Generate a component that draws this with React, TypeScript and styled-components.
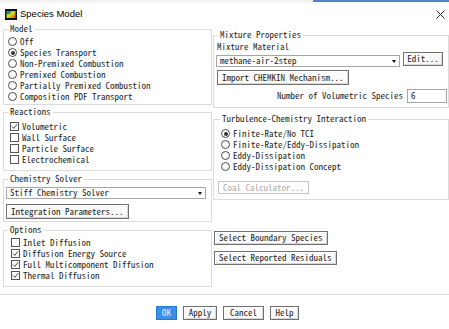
import React from 'react';
import styled, { createGlobalStyle } from 'styled-components';

const MONO = `"Noto Sans Mono CJK SC", "Liberation Mono", monospace`;

const GlobalStyle = createGlobalStyle`
  html, body {
    margin: 0;
    padding: 0;
    background: #fff;
  }
`;

const Frame = styled.div`
  width: 449px;
  height: 329px;
  display: flex;
  flex-direction: column;
  background: #fff;
  overflow: hidden;
  font-family: ${MONO};
  font-size: 9px;
  line-height: 10px;
  color: #262626;
`;

const BackStrip = styled.div`
  height: 3px;
  display: flex;
  background: #f4f4f4;

  .blue {
    margin-left: 313px;
    flex: 1;
    height: 2px;
    background: #5a7fcb;
  }
`;

const TitleBar = styled.div`
  height: 22px;
  display: flex;
  align-items: center;
  padding: 0 4px 0 5px;
  font-family: 'Liberation Sans', Arial, sans-serif;
  font-size: 9.5px;
  line-height: 12px;
  color: #000;

  svg.logo {
    margin-right: 3px;
  }
  .title {
    flex: 1;
  }
`;

const Body = styled.div`
  height: 269px;
  display: flex;
  gap: 1px;
  padding: 0 0 0 3px;
`;

const Column = styled.div<{ $w: number }>`
  width: ${(p) => p.$w}px;
  display: flex;
  flex-direction: column;
`;

const Group = styled.div<{ $mt: number; $pl?: number; $pr?: number; $pb: number }>`
  margin-top: ${(p) => p.$mt}px;
  border: 1px solid #dcdcdc;
  padding: 0 ${(p) => p.$pr ?? 4}px ${(p) => p.$pb}px ${(p) => p.$pl ?? 4}px;
  display: flex;
  flex-direction: column;
  align-items: flex-start;
`;

const Legend = styled.div<{ $after?: number; $ml?: number }>`
  height: 10px;
  line-height: 10px;
  margin: -6px 0 ${(p) => p.$after ?? 2}px ${(p) => p.$ml ?? 0}px;
  padding: 0 2px;
  background: #fff;
  white-space: nowrap;
`;

const Row = styled.label<{ $h?: number }>`
  height: ${(p) => p.$h ?? 11}px;
  line-height: ${(p) => p.$h ?? 11}px;
  display: flex;
  align-items: center;
  gap: 3px;
  white-space: nowrap;
`;

const RadioDot = styled.span<{ $on?: boolean }>`
  width: 9px;
  height: 9px;
  box-sizing: border-box;
  border-radius: 50%;
  border: 1px solid #4a4a4a;
  display: flex;
  align-items: center;
  justify-content: center;

  &::after {
    content: '';
    width: 4px;
    height: 4px;
    border-radius: 50%;
    background: ${(p) => (p.$on ? '#333' : 'transparent')};
  }
`;

const Box = styled.span`
  width: 9px;
  height: 9px;
  box-sizing: border-box;
  border: 1px solid #555;
  display: flex;
`;

const Button = styled.button<{ $w?: number; $h?: number; $mt?: number }>`
  height: ${(p) => p.$h ?? 14}px;
  ${(p) => (p.$w ? `width: ${p.$w}px;` : '')}
  margin-top: ${(p) => p.$mt ?? 0}px;
  padding: 0 4px;
  box-sizing: border-box;
  border: 1px solid #707070;
  box-shadow: inset 1px 1px #fff, inset -1px -1px #d8d8d8;
  background: #fafafa;
  font-family: ${MONO};
  font-size: 9px;
  line-height: 10px;
  color: #262626;
  display: inline-flex;
  align-items: center;
  justify-content: center;
  white-space: nowrap;

  &:disabled {
    border-color: #c4c4c4;
    color: #a8a8a8;
    background: #fff;
    box-shadow: none;
  }
`;

const PrimaryButton = styled(Button)`
  background: #3b8fe6;
  border-color: #2a78cc;
  box-shadow: none;
  color: #e8f2ff;
`;

const Select = styled.div<{ $w: number }>`
  width: ${(p) => p.$w}px;
  height: 12px;
  box-sizing: border-box;
  border: 1px solid #a6a6a6;
  display: flex;
  align-items: center;
  padding: 0 3px 0 3px;
  white-space: nowrap;

  span {
    flex: 1;
  }
  &::after {
    content: '';
    border-left: 2.5px solid transparent;
    border-right: 2.5px solid transparent;
    border-top: 3px solid #111;
  }
`;

const MaterialRow = styled.div`
  display: flex;
  align-items: flex-start;
  margin-left: -1px;

  ${Select} {
    margin-top: 3px;
  }
  ${Button} {
    margin-left: 3px;
  }
`;

const NumberRow = styled.div`
  align-self: stretch;
  margin-top: 4px;
  display: flex;
  align-items: center;
  justify-content: flex-end;
  gap: 4px;
`;

const NumInput = styled.div`
  width: 40px;
  height: 14px;
  box-sizing: border-box;
  border: 1px solid #a6a6a6;
  padding: 0 3px;
  display: flex;
  align-items: center;
`;

const Indent = styled.div<{ $l: number }>`
  margin-left: ${(p) => p.$l}px;
  display: flex;
  flex-direction: column;
`;

const SideButtons = styled.div`
  margin: 31px 0 0 1px;
  display: flex;
  flex-direction: column;
  align-items: flex-start;
  gap: 6px;
`;

const Footer = styled.div`
  flex: 1;
  border-top: 1px solid #dcdcdc;
  display: flex;
  align-items: flex-start;
  gap: 6px;
  padding: 11px 0 0 156px;
`;

const WindowIcon = () => (
  <svg className="logo" width="12" height="11" viewBox="0 0 12 11">
    <defs>
      <linearGradient id="flu" x1="0" y1="0" x2="1" y2="1">
        <stop offset="0" stopColor="#2fbf3a" />
        <stop offset="0.5" stopColor="#d8e020" />
        <stop offset="1" stopColor="#e23a1e" />
      </linearGradient>
    </defs>
    <rect x="0" y="0" width="12" height="11" fill="#111" />
    <rect x="1.5" y="2" width="9" height="7" fill="url(#flu)" />
    <rect x="1.5" y="2" width="4" height="3" fill="#1e60d0" opacity="0.7" />
  </svg>
);

const CloseIcon = () => (
  <svg width="9" height="9" viewBox="0 0 9 9">
    <path d="M0.5 0.5 L8.5 8.5 M8.5 0.5 L0.5 8.5" stroke="#222" strokeWidth="1" />
  </svg>
);

const Radio = ({ on, children }: { on?: boolean; children: React.ReactNode }) => (
  <Row>
    <RadioDot $on={on} />
    {children}
  </Row>
);

const Check = ({ on, children }: { on?: boolean; children: React.ReactNode }) => (
  <Row>
    <Box>
      {on && (
        <svg width="7" height="7" viewBox="0 0 7 7">
          <path d="M1 3.5 L2.8 5.4 L6.2 1.2" stroke="#444" strokeWidth="1" fill="none" />
        </svg>
      )}
    </Box>
    {children}
  </Row>
);

export default function App() {
  return (
    <Frame>
      <GlobalStyle />
      <BackStrip>
        <div className="blue" />
      </BackStrip>
      <TitleBar>
        <WindowIcon />
        <span className="title">Species Model</span>
        <CloseIcon />
      </TitleBar>

      <Body>
        <Column $w={209}>
          <Group $mt={4} $pl={4} $pb={2}>
            <Legend>Model</Legend>
            <Radio>Off</Radio>
            <Radio on>Species Transport</Radio>
            <Radio>Non-Premixed Combustion</Radio>
            <Radio>Premixed Combustion</Radio>
            <Radio>Partially Premixed Combustion</Radio>
            <Radio>Composition PDF Transport</Radio>
          </Group>

          <Group $mt={7} $pl={4} $pb={5}>
            <Legend $after={4}>Reactions</Legend>
            <Indent $l={2}>
              <Check on>Volumetric</Check>
              <Check>Wall Surface</Check>
              <Check>Particle Surface</Check>
              <Check>Electrochemical</Check>
            </Indent>
          </Group>

          <Group $mt={8} $pl={2} $pr={3} $pb={2}>
            <Legend $after={3} $ml={2}>
              Chemistry Solver
            </Legend>
            <Select $w={200}>
              <span>Stiff Chemistry Solver</span>
            </Select>
            <Button $h={15} $mt={5}>
              Integration Parameters...
            </Button>
          </Group>

          <Group $mt={8} $pl={4} $pb={5}>
            <Legend $after={2}>Options</Legend>
            <Indent $l={3}>
              <Check>Inlet Diffusion</Check>
              <Check on>Diffusion Energy Source</Check>
              <Check on>Full Multicomponent Diffusion</Check>
              <Check on>Thermal Diffusion</Check>
            </Indent>
          </Group>
        </Column>

        <Column $w={236}>
          <Group $mt={10} $pl={3} $pr={1} $pb={4}>
            <Legend $after={2} $ml={1}>
              Mixture Properties
            </Legend>
            <Row as="div" $h={10}>
              Mixture Material
            </Row>
            <MaterialRow>
              <Select $w={184}>
                <span>methane-air-2step</span>
              </Select>
              <Button $h={14} $w={40}>
                Edit...
              </Button>
            </MaterialRow>
            <Button $h={15} $mt={3}>
              Import CHEMKIN Mechanism...
            </Button>
            <NumberRow>
              <span>Number of Volumetric Species</span>
              <NumInput>6</NumInput>
            </NumberRow>
          </Group>

          <Group $mt={11} $pl={4} $pb={5}>
            <Legend $after={4} $ml={2}>
              Turbulence-Chemistry Interaction
            </Legend>
            <Indent $l={3}>
              <Radio on>Finite-Rate/No TCI</Radio>
              <Radio>Finite-Rate/Eddy-Dissipation</Radio>
              <Radio>Eddy-Dissipation</Radio>
              <Radio>Eddy-Dissipation Concept</Radio>
            </Indent>
            <Button $h={13} $mt={9} disabled>
              Coal Calculator...
            </Button>
          </Group>

          <SideButtons>
            <Button>Select Boundary Species</Button>
            <Button>Select Reported Residuals</Button>
          </SideButtons>
        </Column>
      </Body>

      <Footer>
        <PrimaryButton $w={21}>OK</PrimaryButton>
        <Button $w={34}>Apply</Button>
        <Button $w={41}>Cancel</Button>
        <Button $w={29}>Help</Button>
      </Footer>
    </Frame>
  );
}
